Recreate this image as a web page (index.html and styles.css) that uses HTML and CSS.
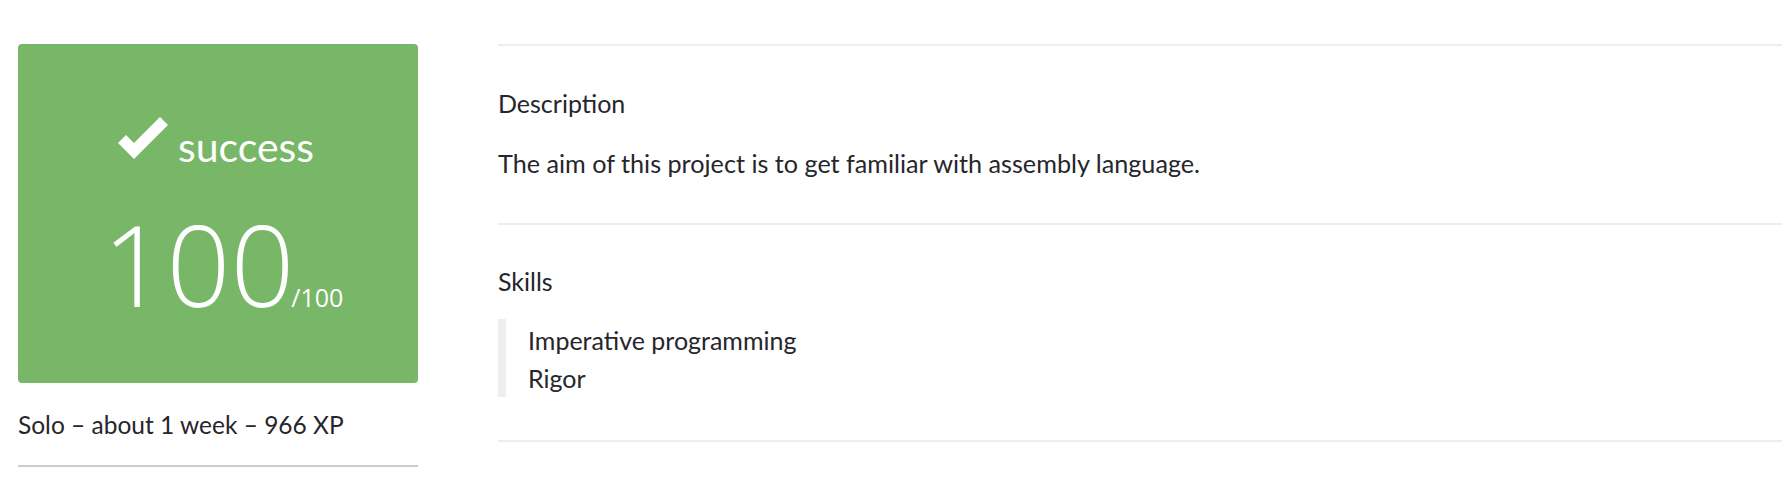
FILE: index.html
```html
<!DOCTYPE html>
<html lang="en">
<head>
<meta charset="utf-8">
<title>Project</title>
<link rel="stylesheet" href="styles.css">
</head>
<body>
<main class="project">
  <aside class="summary">
    <div class="mark">
      <div class="status">
        <svg class="check" viewBox="0 0 50 42" width="50" height="42" aria-hidden="true">
          <polygon points="0,26 8,18 16,26 42,0 50,8 16,42" fill="#fff"/>
        </svg>
        <span class="status-text">success</span>
      </div>
      <div class="score"><span class="score-value">100</span><span class="score-max">/100</span></div>
    </div>
    <p class="meta">Solo – about 1 week – 966 XP</p>
  </aside>
  <div class="details">
    <section class="block">
      <h4 class="block-title">Description</h4>
      <p class="block-text">The aim of this project is to get familiar with assembly language.</p>
    </section>
    <section class="block">
      <h4 class="block-title">Skills</h4>
      <ul class="skills">
        <li>Imperative programming</li>
        <li>Rigor</li>
      </ul>
    </section>
  </div>
</main>
</body>
</html>
```
FILE: styles.css
```css
html, body {
  margin: 0;
  padding: 0;
  background: #fff;
}
body {
  font-family: Lato, "Open Sans", sans-serif;
  color: #26262b;
  font-size: 25px;
}
.project {
  display: flex;
  align-items: flex-start;
  gap: 80px;
  padding: 44px 0 0 18px;
}
.summary {
  width: 400px;
  flex: none;
}
.mark {
  background: #78b668;
  border-radius: 4px;
  height: 339px;
  color: #fff;
  display: flex;
  flex-direction: column;
  align-items: center;
  box-sizing: border-box;
  padding-top: 78px;
}
.status {
  display: flex;
  align-items: center;
  gap: 10px;
  height: 50px;
  margin-left: -4px;
}
.check {
  display: block;
  margin-top: -18px;
}
.status-text {
  font-family: Lato, sans-serif;
  font-size: 41px;
  line-height: 50px;
}
.score {
  margin-top: 33px;
  line-height: 118px;
  white-space: nowrap;
  padding-left: 10px;
}
.score-value {
  font-family: "Open Sans", sans-serif;
  font-weight: 300;
  font-size: 112px;
}
.score-max {
  font-family: "Open Sans", sans-serif;
  font-weight: 400;
  font-size: 25px;
  margin-left: -3px;
}
.meta {
  margin: 24px 0 0 0;
  font-size: 24.5px;
  line-height: 36px;
  padding-bottom: 22px;
  border-bottom: 2px solid #cccccc;
}
.details {
  flex: 1;
  border-top: 2px solid #eeeeee;
}
.block {
  border-bottom: 2px solid #eeeeee;
}
.block:first-child {
  padding: 39px 0 42px;
}
.block:last-child {
  padding: 38px 0 43px;
}
.block-title {
  margin: 0;
  font-weight: 400;
  font-size: 25px;
  line-height: 36px;
}
.block-text {
  margin: 24px 0 0;
  font-size: 25.2px;
  line-height: 36px;
}
.skills {
  list-style: none;
  margin: 20px 0 0;
  padding: 2px 0 0 22px;
  border-left: 8px solid #eeeeee;
  line-height: 38px;
}
```
